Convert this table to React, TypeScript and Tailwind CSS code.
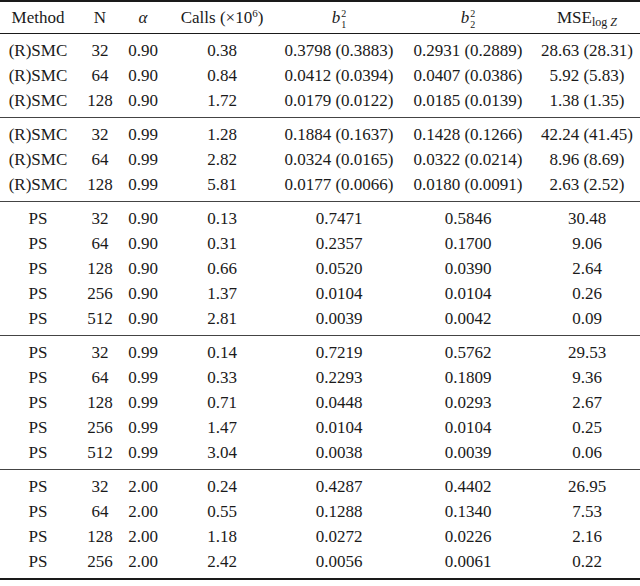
import React from 'react'

type Row = [string, string, string, string, string, string, string]

const groups: Row[][] = [
  [
    ['(R)SMC', '32', '0.90', '0.38', '0.3798 (0.3883)', '0.2931 (0.2889)', '28.63 (28.31)'],
    ['(R)SMC', '64', '0.90', '0.84', '0.0412 (0.0394)', '0.0407 (0.0386)', '5.92 (5.83)'],
    ['(R)SMC', '128', '0.90', '1.72', '0.0179 (0.0122)', '0.0185 (0.0139)', '1.38 (1.35)'],
  ],
  [
    ['(R)SMC', '32', '0.99', '1.28', '0.1884 (0.1637)', '0.1428 (0.1266)', '42.24 (41.45)'],
    ['(R)SMC', '64', '0.99', '2.82', '0.0324 (0.0165)', '0.0322 (0.0214)', '8.96 (8.69)'],
    ['(R)SMC', '128', '0.99', '5.81', '0.0177 (0.0066)', '0.0180 (0.0091)', '2.63 (2.52)'],
  ],
  [
    ['PS', '32', '0.90', '0.13', '0.7471', '0.5846', '30.48'],
    ['PS', '64', '0.90', '0.31', '0.2357', '0.1700', '9.06'],
    ['PS', '128', '0.90', '0.66', '0.0520', '0.0390', '2.64'],
    ['PS', '256', '0.90', '1.37', '0.0104', '0.0104', '0.26'],
    ['PS', '512', '0.90', '2.81', '0.0039', '0.0042', '0.09'],
  ],
  [
    ['PS', '32', '0.99', '0.14', '0.7219', '0.5762', '29.53'],
    ['PS', '64', '0.99', '0.33', '0.2293', '0.1809', '9.36'],
    ['PS', '128', '0.99', '0.71', '0.0448', '0.0293', '2.67'],
    ['PS', '256', '0.99', '1.47', '0.0104', '0.0104', '0.25'],
    ['PS', '512', '0.99', '3.04', '0.0038', '0.0039', '0.06'],
  ],
  [
    ['PS', '32', '2.00', '0.24', '0.4287', '0.4402', '26.95'],
    ['PS', '64', '2.00', '0.55', '0.1288', '0.1340', '7.53'],
    ['PS', '128', '2.00', '1.18', '0.0272', '0.0226', '2.16'],
    ['PS', '256', '2.00', '2.42', '0.0056', '0.0061', '0.22'],
  ],
]

const widths = [76, 48, 38, 120, 114, 144, 100]

// italic base with a stacked superscript / subscript pair
function Stack({ base, sup, sub }: { base: string; sup: string; sub: string }) {
  return (
    <span className="inline-flex items-center">
      <i>{base}</i>
      <span className="ml-px mt-[3px] inline-flex flex-col text-[10px] leading-[11px]">
        <span>{sup}</span>
        <span>{sub}</span>
      </span>
    </span>
  )
}

export default function App() {
  return (
    <div className="w-[640px] bg-white font-['Liberation_Serif',serif] text-[17px] text-[#1a1a1a]">
      <table className="w-[640px] table-fixed border-collapse">
        <colgroup>
          {widths.map((w, i) => (
            <col key={i} style={{ width: w }} />
          ))}
        </colgroup>
        <thead>
          <tr className="border-t-2 border-b border-[#1a1a1a]">
            <th className="h-[32px] p-0 text-center font-normal">Method</th>
            <th className="p-0 text-center font-normal">N</th>
            <th className="p-0 text-center font-normal">
              <i>α</i>
            </th>
            <th className="p-0 text-center font-normal">
              Calls (×10<sup className="text-[11px]">6</sup>)
            </th>
            <th className="p-0 text-center font-normal">
              <Stack base="b" sup="2" sub="1" />
            </th>
            <th className="p-0 text-center font-normal">
              <Stack base="b" sup="2" sub="2" />
            </th>
            <th className="p-0 pr-[6px] text-center font-normal">
              MSE
              <sub className="text-[12px]">
                log <i>Z</i>
              </sub>
            </th>
          </tr>
        </thead>
        {groups.map((g, gi) => (
          <tbody
            key={gi}
            className={
              gi === groups.length - 1
                ? 'border-b-2 border-[#1a1a1a]'
                : 'border-b border-[#444]'
            }
          >
            {g.map((r, ri) => {
              const pad =
                (ri === 0 ? 'pt-1 ' : '') + (ri === g.length - 1 ? 'pb-1' : '')
              return (
                <tr key={ri}>
                  {r.map((c, ci) => (
                    <td
                      key={ci}
                      className={`p-0 text-center leading-[25px] ${pad} ${ci === 6 ? 'pr-[6px]' : ''}`}
                    >
                      {c}
                    </td>
                  ))}
                </tr>
              )
            })}
          </tbody>
        ))}
      </table>
    </div>
  )
}
